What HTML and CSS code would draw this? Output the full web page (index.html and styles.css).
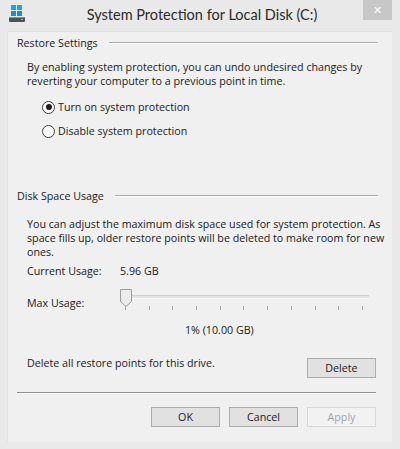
FILE: index.html
```html
<!DOCTYPE html>
<html lang="en">
<head>
    <meta charset="UTF-8">
    <title>System Protection for Local Disk (C:)</title>
    <link rel="stylesheet" href="styles.css">
</head>
<body>
    <div class="window">
        <div class="titlebar">
            <div class="app-icon">
                <svg width="18" height="18" viewBox="0 0 18 18">
                    <rect x="3" y="0" width="5" height="5" fill="#1ea4e3"/>
                    <rect x="9" y="0" width="5" height="5" fill="#1ea4e3"/>
                    <rect x="3" y="6" width="5" height="5" fill="#1590d4"/>
                    <rect x="9" y="6" width="5" height="5" fill="#1590d4"/>
                    <rect x="1" y="12" width="16" height="5" rx="1" fill="#4b5258"/>
                    <rect x="1" y="12" width="16" height="1" fill="#8a9197"/>
                    <rect x="13" y="14" width="2" height="1" fill="#6fd46a"/>
                </svg>
            </div>
            <div class="title">System Protection for Local Disk (C:)</div>
            <div class="close-wrap"><div class="close">&#x2715;</div></div>
        </div>

        <div class="client">
            <div class="group-head">
                <span>Restore Settings</span>
                <span class="rule"></span>
            </div>
            <p class="desc first">By enabling system protection, you can undo undesired changes by<br>reverting your computer to a previous point in time.</p>
            <div class="options">
                <div class="radio"><span class="dot checked"></span>Turn on system protection</div>
                <div class="radio"><span class="dot"></span>Disable system protection</div>
            </div>

            <div class="group-head second">
                <span>Disk Space Usage</span>
                <span class="rule"></span>
            </div>
            <p class="desc usage">You can adjust the maximum disk space used for system protection. As<br>space fills up, older restore points will be deleted to make room for new<br>ones.</p>

            <div class="field current">
                <span class="field-label">Current Usage:</span>
                <span>5.96 GB</span>
            </div>

            <div class="field max">
                <span class="field-label">Max Usage:</span>
                <div class="slider">
                    <div class="track"></div>
                    <div class="thumb">
                        <svg width="12" height="18" viewBox="0 0 12 18">
                            <path d="M0.5 0.5 H11.5 V12.5 L6 17.5 L0.5 12.5 Z" fill="#ececec" stroke="#9c9c9c"/>
                        </svg>
                    </div>
                    <div class="ticks">
                        <span></span><span></span><span></span><span></span><span></span><span></span>
                        <span></span><span></span><span></span><span></span><span></span>
                    </div>
                </div>
            </div>
            <div class="percent">1% (10.00 GB)</div>

            <div class="delete-row">
                <span>Delete all restore points for this drive.</span>
                <button class="btn delete">Delete</button>
            </div>

            <div class="separator"></div>

            <div class="actions">
                <button class="btn">OK</button>
                <button class="btn">Cancel</button>
                <button class="btn disabled">Apply</button>
            </div>
        </div>
    </div>
</body>
</html>
```

FILE: styles.css
```css
body {
    margin: 0;
    background-color: #e9e9e9;
    font-family: "Open Sans", "Noto Sans", sans-serif;
    font-size: 10.7px;
    color: #1a1a1a;
}
.window {
    width: 400px;
    height: 449px;
    background-color: #e9e9e9;
    display: flex;
    flex-direction: column;
}
.titlebar {
    height: 31px;
    display: grid;
    grid-template-columns: 1fr auto 1fr;
    align-items: start;
}
.app-icon {
    padding: 5px 0 0 8px;
}
.title {
    font-family: Lato, "Open Sans", sans-serif;
    font-size: 14.5px;
    color: #2b2b2b;
    line-height: 30px;
    padding-left: 4px;
}
.close-wrap {
    display: flex;
    justify-content: flex-end;
    padding-right: 8px;
}
.close {
    width: 29px;
    height: 20px;
    background-color: #c7c7c7;
    color: #ffffff;
    font-size: 11px;
    line-height: 20px;
    text-align: center;
}
.client {
    flex: 1;
    margin: 0 8px 7px 7px;
    background-color: #f0f0f0;
    border-top: 1px solid #e2e2e2;
    border-left: 1px solid #e2e2e2;
    padding: 4px 16px 0 9px;
    line-height: 14px;
}
.group-head {
    display: flex;
    align-items: center;
    gap: 11px;
}
.group-head.second {
    margin-top: 51px;
}
.rule {
    flex: 1;
    height: 1px;
    margin-right: -2px;
    background-color: #a9a9a9;
    border-bottom: 1px solid #ffffff;
}
.desc {
    margin: 10px 0 0 10px;
    white-space: nowrap;
}
.desc.usage {
    margin-top: 14px;
}
.options {
    margin: 12px 0 0 25px;
    display: flex;
    flex-direction: column;
    gap: 10px;
}
.radio {
    display: flex;
    align-items: center;
    gap: 3px;
}
.dot {
    width: 11px;
    height: 11px;
    border: 1px solid #3c3c3c;
    border-radius: 50%;
    background-color: #ffffff;
    display: flex;
    align-items: center;
    justify-content: center;
}
.dot.checked::after {
    content: "";
    width: 6px;
    height: 6px;
    border-radius: 50%;
    background-color: #1e1e1e;
}
.field {
    margin-left: 10px;
    display: flex;
    align-items: center;
}
.field-label {
    width: 93px;
}
.field.current {
    margin-top: 5px;
}
.field.max {
    margin-top: 18px;
    align-items: flex-start;
}
.slider {
    position: relative;
    width: 249px;
    height: 22px;
    margin-top: -7px;
}
.track {
    position: absolute;
    left: 5px;
    right: 0;
    top: 6px;
    height: 2px;
    background-color: #e4e4e4;
    border-top: 1px solid #cfcfcf;
    border-bottom: 1px solid #f8f8f8;
}
.thumb {
    position: absolute;
    left: 0;
    top: 0;
    line-height: 0;
}
.ticks {
    position: absolute;
    left: 5px;
    width: 238px;
    top: 17px;
    display: flex;
    justify-content: space-between;
}
.ticks span {
    width: 1px;
    height: 4px;
    background-color: #a8a8a8;
}
.percent {
    margin: 12px 0 0 168px;
}
.delete-row {
    margin: 19px 0 0 10px;
    display: flex;
    justify-content: space-between;
    align-items: flex-start;
}
.btn {
    font-family: "Open Sans", "Noto Sans", sans-serif;
    font-size: 10.7px;
    color: #1a1a1a;
    width: 69px;
    height: 20px;
    padding: 0;
    background-color: #e1e1e1;
    border: 1px solid #acacac;
    border-radius: 0;
}
.btn.delete {
    margin-top: 2px;
}
.btn.disabled {
    color: #a3a3a3;
    background-color: #f2f2f2;
    border-color: #d8d8d8;
}
.separator {
    margin-top: 14px;
    height: 1px;
    background-color: #8f8f8f;
    border-bottom: 1px solid #fbfbfb;
}
.actions {
    margin-top: 13px;
    display: flex;
    justify-content: flex-end;
    gap: 9px;
}
```
